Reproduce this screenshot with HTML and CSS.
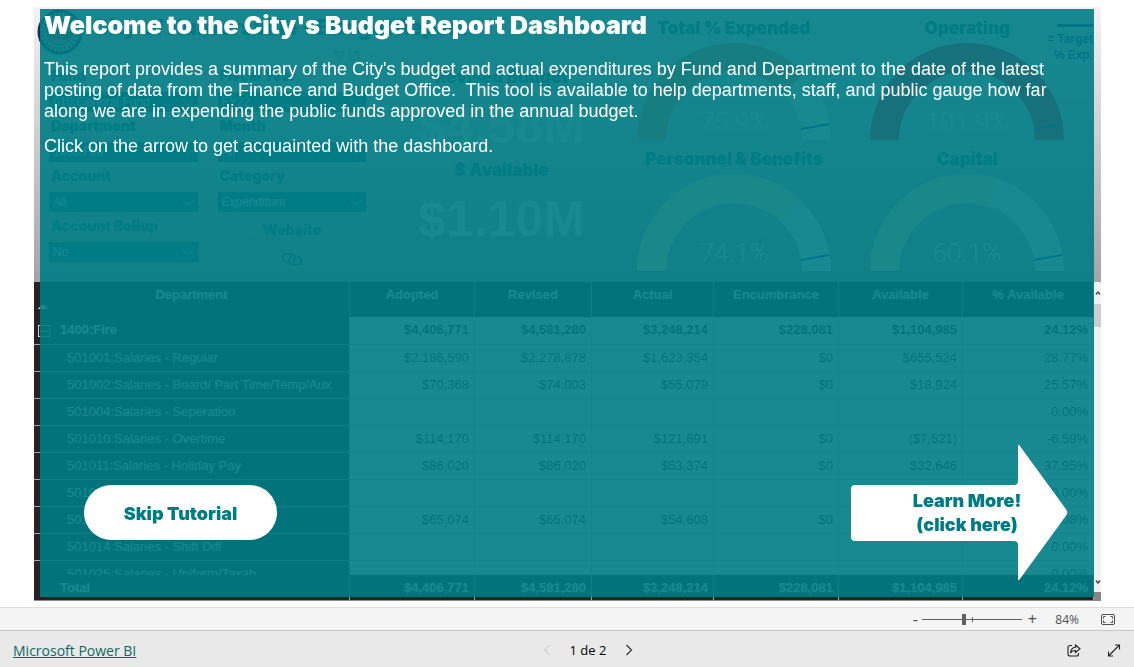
FILE: index.html
```html
<!DOCTYPE html>
<html lang="en">
<head>
<meta charset="utf-8">
<meta name="viewport" content="width=device-width, initial-scale=1">
<title>City Budget Report Dashboard</title>
<link rel="stylesheet" href="styles.css">
</head>
<body>
<div class="viewer">
  <main class="stage">
    <div class="report">
      <section class="summary">
        <div class="filters">
          <header class="brand">
            <svg class="seal" viewBox="0 0 46 46" aria-hidden="true">
              <circle cx="23" cy="23" r="21" fill="#c9ccd0" stroke="#1b2a5c" stroke-width="3"/>
              <circle cx="23" cy="23" r="17" fill="none" stroke="#56627f" stroke-width="4" stroke-dasharray="2 2"/>
              <circle cx="23" cy="23" r="13" fill="#8fa08a" stroke="#27375f" stroke-width="1"/>
              <path d="M11 24q6-8 12-3t12 0v6q-12 8-24 0z" fill="#4e7a52"/>
              <circle cx="19" cy="27" r="3" fill="#b9482e"/><circle cx="25" cy="25" r="3" fill="#c9702e"/><circle cx="28" cy="29" r="2" fill="#b9482e"/>
            </svg>
            <h2 class="report-title">City of Huntersville - Budget Report</h2>
          </header>
          <div class="slicers">
            <div class="slicer"><label for="fund">Fund</label><select id="fund"><option>010:General Fund</option></select></div>
            <div class="slicer"><label for="year">Fiscal Year</label><select id="year"><option>FY22</option></select></div>
            <div class="slicer"><label for="dept">Department</label><select id="dept"><option>1400:Fire</option></select></div>
            <div class="slicer"><label for="month">Month</label><select id="month"><option>All</option></select></div>
            <div class="slicer"><label for="account">Account</label><select id="account"><option>All</option></select></div>
            <div class="slicer"><label for="category">Category</label><select id="category"><option>Expenditure</option></select></div>
            <div class="slicer"><label for="rollup">Account Rollup</label><select id="rollup"><option>No</option></select></div>
            <a class="website" href="#website">Website
              <svg viewBox="0 0 20 14" width="20" height="14" fill="none" stroke="#0b4a7a" stroke-width="1.3" aria-hidden="true"><path d="M5 10C2 10 1 8 1 6s1-4 4-4h4c3 0 4 2 4 4S12 9.500 10 9.500"/><path d="M15 4.500c3 0 4 1.500 4 4s-1 4-4 4h-4c-3 0-4-1.500-4-4S8 5 10 5"/></svg>
            </a>
          </div>
          <div class="visual-tools" aria-hidden="true">
            <svg viewBox="0 0 44 12" width="44" height="12" fill="none" stroke="#888" stroke-width="1"><path d="M1 2h9L7 6v4l-3-2V6zM17 2h-1v8h8V7M19 2h5v4M24 2l-5 5M32 6h2M36 6h2M40 6h2"/></svg>
          </div>
        </div>

        <div class="kpis">
          <div class="kpi"><h3>Revised Budget</h3><p>$4.58M</p></div>
          <div class="kpi"><h3>$ Available</h3><p>$1.10M</p></div>
        </div>

        <div class="gauges">
          <div class="gauge"><h3>Total % Expended</h3>
            <svg viewBox="0 0 194 97" role="img" aria-label="75.9%"><path class="track" d="M14.500 97a82.500 82.500 0 0 1 165 0"/><path class="fill warn" pathLength="100" stroke-dasharray="75.9 200" d="M14.500 97a82.500 82.500 0 0 1 165 0"/><path class="target" d="M164 86l28-5"/><text class="value" x="97" y="88">75.9%</text></svg></div>
          <div class="gauge"><h3>Operating</h3>
            <svg viewBox="0 0 194 97" role="img" aria-label="101.9%"><path class="fill over" d="M14.500 97a82.500 82.500 0 0 1 165 0"/><path class="target" d="M164 86l28-5"/><text class="value" x="97" y="88">101.9%</text></svg></div>
          <div class="gauge"><h3>Personnel &amp; Benefits</h3>
            <svg viewBox="0 0 194 97" role="img" aria-label="74.1%"><path class="track" d="M14.500 97a82.500 82.500 0 0 1 165 0"/><path class="fill good" pathLength="100" stroke-dasharray="74.1 200" d="M14.500 97a82.500 82.500 0 0 1 165 0"/><path class="target" d="M164 86l28-5"/><text class="value" x="97" y="88">74.1%</text></svg></div>
          <div class="gauge"><h3>Capital</h3>
            <svg viewBox="0 0 194 97" role="img" aria-label="60.1%"><path class="track" d="M14.500 97a82.500 82.500 0 0 1 165 0"/><path class="fill good" pathLength="100" stroke-dasharray="60.1 200" d="M14.500 97a82.500 82.500 0 0 1 165 0"/><path class="target" d="M164 86l28-5"/><text class="value" x="97" y="88">60.1%</text></svg></div>
        </div>
        <div class="legend"><span class="legend-line"></span>= Target<br>% Exp.</div>
      </section>

      <section class="matrix">
        <div class="matrix-view">
          <table>
            <colgroup><col class="c-name"><col class="c-adopted"><col class="c-revised"><col class="c-actual"><col class="c-enc"><col class="c-avail"><col class="c-pct"></colgroup>
            <thead><tr><th scope="col">Department<span class="sort"></span></th><th scope="col">Adopted</th><th scope="col">Revised</th><th scope="col">Actual</th><th scope="col">Encumbrance</th><th scope="col">Available</th><th scope="col">% Available</th></tr></thead>
            <tbody>
              <tr class="group"><th scope="row"><span class="toggle"></span>1400:Fire</th><td>$4,406,771</td><td>$4,581,280</td><td>$3,248,214</td><td>$228,081</td><td>$1,104,985</td><td>24.12%</td></tr>
              <tr><th scope="row">501001:Salaries - Regular</th><td>$2,186,590</td><td>$2,278,878</td><td>$1,623,354</td><td>$0</td><td>$655,524</td><td>28.77%</td></tr>
              <tr><th scope="row">501002:Salaries - Board/ Part Time/Temp/Aux</th><td>$70,368</td><td>$74,003</td><td>$55,079</td><td>$0</td><td>$18,924</td><td>25.57%</td></tr>
              <tr><th scope="row">501004:Salaries - Seperation</th><td></td><td></td><td></td><td></td><td></td><td>0.00%</td></tr>
              <tr><th scope="row">501010:Salaries - Overtime</th><td>$114,170</td><td>$114,170</td><td>$121,691</td><td>$0</td><td>($7,521)</td><td>-6.59%</td></tr>
              <tr><th scope="row">501011:Salaries - Holiday Pay</th><td>$86,020</td><td>$86,020</td><td>$53,374</td><td>$0</td><td>$32,646</td><td>37.95%</td></tr>
              <tr><th scope="row">501012:Salaries - Other</th><td></td><td></td><td></td><td></td><td></td><td>0.00%</td></tr>
              <tr><th scope="row">501013:Salaries - Longevity</th><td>$65,074</td><td>$65,074</td><td>$54,608</td><td>$0</td><td>$10,466</td><td>16.08%</td></tr>
              <tr><th scope="row">501014:Salaries - Shift Diff</th><td></td><td></td><td></td><td></td><td></td><td>0.00%</td></tr>
              <tr><th scope="row">501025:Salaries - Uniform/Taxab</th><td></td><td></td><td></td><td></td><td></td><td>0.00%</td></tr>
            </tbody>
            <tfoot><tr><th scope="row">Total</th><td>$4,406,771</td><td>$4,581,280</td><td>$3,248,214</td><td>$228,081</td><td>$1,104,985</td><td>24.12%</td></tr></tfoot>
          </table>
        </div>
        <div class="scrollbar" aria-hidden="true">
          <svg viewBox="0 0 7 22" width="7" height="22" fill="none" stroke="#505050" stroke-width="1.500"><path d="M2 12.500l2-2.500 2 2.500"/></svg>
          <span class="thumb"></span>
          <svg class="down" viewBox="0 0 7 20" width="7" height="20" fill="none" stroke="#505050" stroke-width="1.500"><path d="M2 8.500l2 2.500 2-2.500"/></svg>
          <span class="corner"></span>
        </div>
      </section>

      <section class="tutorial">
        <h1>Welcome to the City's Budget Report Dashboard</h1>
        <p>This report provides a summary of the City's budget and actual expenditures by Fund and Department to the date of the latest posting of data from the Finance and Budget Office.&nbsp; This tool is available to help departments, staff, and public gauge how far along we are in expending the public funds approved in the annual budget.</p>
        <p>Click on the arrow to get acquainted with the dashboard.</p>
        <div class="actions">
          <button class="skip" type="button">Skip Tutorial</button>
          <button class="learn" type="button">
            <svg viewBox="0 0 217 137" aria-hidden="true"><path fill="#fff" d="M4 41H163q4 0 4-4V2q0-2 1.500-.500L215.500 66q1.500 2.500 0 5L168.500 135.500q-1.500 1.500-1.500-.500V101q0-4-4-4H4q-4 0-4-4V45q0-4 4-4z"/></svg>
            <span>Learn More!<br>(click here)</span>
          </button>
        </div>
      </section>
    </div>
  </main>

  <div class="zoombar">
    <button type="button" class="step" aria-label="Zoom out">-</button>
    <input class="zoom" type="range" min="0" max="100" value="41" aria-label="Zoom">
    <button type="button" class="step" aria-label="Zoom in">+</button>
    <span class="percent">84%</span>
    <button type="button" class="icon" aria-label="Fit to page"><svg viewBox="0 0 14 11" width="14" height="11" fill="none" stroke="#505050"><rect x=".5" y=".5" width="13" height="10" rx="1.500"/><path d="M2.500 4.500v-2h2M9.500 2.500h2v2M11.500 6.500v2h-2M4.500 8.500h-2v-2"/></svg></button>
  </div>

  <footer class="statusbar">
    <a href="#powerbi">Microsoft Power BI</a>
    <nav class="pager" aria-label="Pages">
      <button type="button" class="icon" disabled aria-label="Previous page"><svg viewBox="0 0 8 12" width="8" height="12" fill="none" stroke="#c0c0c0"><path d="M6.500 1l-5 5 5 5"/></svg></button>
      <span>1 de 2</span>
      <button type="button" class="icon" aria-label="Next page"><svg viewBox="0 0 8 12" width="8" height="12" fill="none" stroke="#333" stroke-width="1.200"><path d="M1.500 1l5 5-5 5"/></svg></button>
    </nav>
    <div class="tools">
      <button type="button" class="icon" aria-label="Share"><svg viewBox="0 0 14 13" width="14" height="13" fill="none" stroke="#222" stroke-width="1.100"><path d="M5 1.500H3q-2 0-2 2V10q0 2 2 2h6.500q2 0 2-2V9"/><path d="M8.500 1l4.500 3.800-4.500 3.700V6.500C6 6.500 4.500 7.300 3.500 9c.2-3.200 2-5.500 5-5.800z"/></svg></button>
      <button type="button" class="icon" aria-label="Full screen"><svg viewBox="0 0 14 13" width="14" height="13" fill="none" stroke="#222" stroke-width="1.100"><path d="M1.500 12L12.500 1M8 1h4.500v4.500M1.500 7.500V12H6"/></svg></button>
    </div>
  </footer>
</div>
</body>
</html>
```
FILE: styles.css
```css
* { box-sizing: border-box; }

body {
  margin: 0;
  background: #fff;
  font-family: "Liberation Sans", Arial, sans-serif;
  font-size: 13px;
  color: #252423;
}

h1, h2, h3, p { margin: 0; }

button {
  padding: 0;
  border: 0;
  background: none;
  font: inherit;
  color: inherit;
}

.viewer {
  display: flex;
  flex-direction: column;
  min-height: 100vh;
}

.stage {
  flex: 1;
  display: flex;
  padding: 7px 33px 6px 34px;
}

.report {
  position: relative;
  flex: 1;
  display: flex;
  flex-direction: column;
  min-width: 0;
}

/* Summary area */
.summary {
  position: relative;
  display: grid;
  grid-template-columns: minmax(0, 352fr) minmax(0, 231fr) minmax(0, 467fr) minmax(0, 17fr);
  height: 275px;
  background: linear-gradient(#f3f3f3, #a4a4a4);
}

.summary h3, .slicer label, .website, .report-title {
  font-family: Inter, "Liberation Sans", sans-serif;
  font-weight: 900;
  color: #007c85;
}

.filters { position: relative; padding: 2px 20px 0 3px; }

.brand { display: flex; align-items: center; gap: 10px; height: 46px; white-space: nowrap; }
.seal { flex: none; width: 46px; height: 46px; }
.report-title { padding-bottom: 10px; font-size: 21px; color: #20707c; }

.slicers {
  display: grid;
  grid-template-columns: 1fr 1fr;
  grid-auto-rows: 50px;
  column-gap: 20px;
  padding: 13px 0 0 12px;
}

.slicer { display: flex; flex-direction: column; gap: 8px; }
.slicer label { padding-left: 2px; font-size: 14px; line-height: 16px; }
.slicer select {
  appearance: none;
  width: 100%;
  height: 20px;
  padding: 0 4px;
  border: 0;
  border-radius: 0;
  background: #007c85 url("data:image/svg+xml,%3Csvg xmlns='http://www.w3.org/2000/svg' width='12' height='7' fill='none' stroke='white'%3E%3Cpath d='M.5.5L6 6 11.500.5'/%3E%3C/svg%3E") no-repeat right 4px center;
  color: #fff;
  font: 12px "Liberation Sans", Arial, sans-serif;
}

.website {
  display: flex;
  flex-direction: column;
  align-items: center;
  gap: 14px;
  padding-top: 4px;
  font-size: 14px;
  line-height: 16px;
  text-decoration: none;
}

.visual-tools { position: absolute; right: 8px; top: 43px; }

.kpis { padding-top: 61px; text-align: center; }
.kpi { height: 93px; }
.summary .kpi h3 { font-size: 17px; line-height: 18px; }
.kpi p { padding-top: 11px; font-size: 50px; line-height: 58px; font-weight: 700; color: #fff; }

.gauges {
  display: grid;
  grid-template-columns: 1fr 1fr;
  grid-auto-rows: 131px;
  justify-items: center;
  padding-top: 12px;
}

.gauge { display: flex; flex-direction: column; align-items: center; gap: 6px; }
.gauge h3 { font-size: 17px; line-height: 18px; white-space: nowrap; }
.gauge svg { width: 194px; }
.track, .fill { fill: none; stroke-width: 29; }
.track { stroke: #fff; }
.warn { stroke: #e08a5a; }
.over { stroke: #e0102a; }
.good { stroke: #f4eea8; }
.target { stroke: #0037a8; stroke-width: 2; }
.value { fill: #fff; font: 300 26px Roboto, sans-serif; text-anchor: middle; }

.legend {
  position: absolute;
  top: 17px;
  right: 8px;
  color: #0037b8;
  font-size: 12px;
  font-weight: 700;
  line-height: 16px;
  text-align: right;
}
.legend-line { display: block; width: 36px; height: 3px; margin: 0 0 4px auto; background: #0037b8; }

/* Matrix */
.matrix {
  flex: 1 0 319px;
  display: flex;
  height: 319px;
  border-bottom: 1px solid #8a8a8a;
  background: #252423;
}

.matrix-view { flex: 1; overflow: hidden; }

table {
  width: 100%;
  table-layout: fixed;
  border-collapse: separate;
  border-spacing: 0;
}

.c-name { width: 316px; }
.c-adopted { width: 125px; }
.c-revised { width: 117px; }
.c-actual { width: 122px; }
.c-enc { width: 125px; }
.c-avail { width: 124px; }
.c-pct { width: 131px; }

th, td {
  height: 27px;
  padding: 0 5px 2px 0;
  border-right: 1px solid #d2d2d2;
  border-bottom: 1px solid #d2d2d2;
  background: #fff;
  font-weight: 400;
  text-align: right;
  white-space: nowrap;
}

th { border-color: #a6a6a6; background: #252423; color: #fff; }
tbody th { padding-left: 33px; text-align: left; }
td { color: #252423; }

thead th {
  position: sticky;
  top: 0;
  height: 35px;
  padding: 5px 0 0;
  border-bottom: 0;
  font-weight: 700;
  text-align: center;
  vertical-align: top;
}

.group th, .group td { height: 28px; font-weight: 700; padding-bottom: 3px; }
.group th { position: relative; padding-left: 26px; }

.toggle {
  position: absolute;
  left: 4px;
  top: 8px;
  width: 12px;
  height: 12px;
  border: 1px solid #d0d0d0;
  background: linear-gradient(#d0d0d0, #d0d0d0) center / 8px 1px no-repeat;
}

.sort {
  position: absolute;
  left: 4px;
  bottom: 8px;
  border: 5px solid transparent;
  border-top: 0;
  border-bottom-color: #fff;
}

tfoot th, tfoot td {
  position: sticky;
  bottom: 0;
  height: 25px;
  padding-bottom: 1px;
  border-bottom: 0;
  background: #252423;
  color: #fff;
  font-weight: 700;
}
tfoot th { padding-left: 26px; text-align: left; }
tfoot td { border-right-color: #a6a6a6; }

.scrollbar { display: flex; flex-direction: column; width: 7px; background: #f0f0f0; }
.thumb { height: 23px; background: #cdcdcd; }
.down { margin-top: auto; }
.corner { height: 8px; background: #858585; }

/* Tutorial layer over the report */
.tutorial {
  position: absolute;
  inset: 2px 7px 4px 6px;
  display: flex;
  flex-direction: column;
  padding: 2px 26px 16px 4px;
  background: rgba(0, 124, 133, 0.9);
  color: #fff;
}

.tutorial h1 {
  margin-bottom: 19px;
  font: 900 25px/29px Inter, "Liberation Sans", sans-serif;
}

.tutorial p { margin-bottom: 14px; font-size: 18px; line-height: 21px; }

.actions {
  display: flex;
  align-items: center;
  justify-content: space-between;
  margin-top: auto;
  padding-left: 40px;
}

.skip, .learn {
  color: #007c85;
  font: 900 18px/24px Inter, "Liberation Sans", sans-serif;
}

.skip { width: 193px; height: 55px; border-radius: 28px; background: #fff; padding-top: 2px; }

.learn { position: relative; width: 217px; height: 137px; padding-left: 15px; }
.learn svg { position: absolute; inset: 0; }
.learn span { position: relative; }

/* Bottom bars */
.zoombar, .statusbar {
  display: flex;
  align-items: center;
  font-family: "Open Sans", "Noto Sans", sans-serif;
}

.zoombar {
  justify-content: flex-end;
  height: 23px;
  padding-right: 19px;
  border-top: 1px solid #dedede;
  background: #f4f4f4;
  color: #505050;
  font-size: 12px;
}

.step { width: 14px; font-size: 16px; line-height: 20px; }

.zoom {
  appearance: none;
  width: 100px;
  height: 11px;
  margin: 0 3px 0 0;
  background:
    linear-gradient(#606060, #606060) 50px center / 1px 5px no-repeat,
    linear-gradient(#606060, #606060) center / 100% 1px no-repeat;
}
.zoom::-webkit-slider-thumb { appearance: none; width: 4px; height: 11px; background: #606060; }

.percent { margin: 0 22px 0 16px; }

.icon { display: flex; }

.statusbar {
  display: grid;
  grid-template-columns: 1fr auto 1fr;
  height: 37px;
  padding: 2px 13px 0;
  border-top: 1px solid #c6c6c6;
  background: #e9e9e9;
  font-size: 13px;
  color: #000;
}
.statusbar a { color: #0b6a5d; font-size: 14px; }

.pager { display: flex; align-items: center; gap: 19px; padding-left: 42px; }
.tools { display: flex; justify-content: flex-end; gap: 26px; }
```
